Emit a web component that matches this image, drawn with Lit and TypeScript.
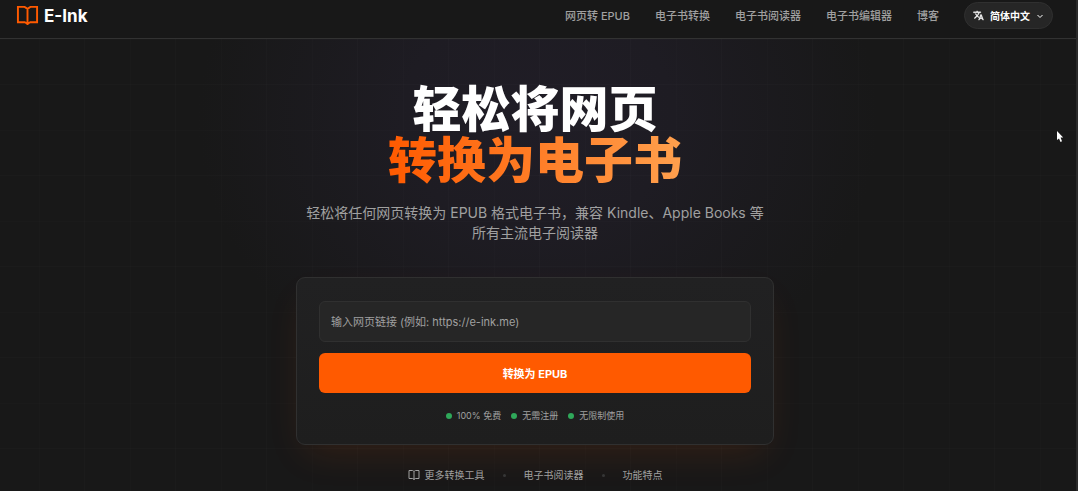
import { LitElement, html, css, svg } from "lit";
import { customElement, state } from "lit/decorators.js";

const bookIcon = svg`
  <path d="M12 6v16M2 3h7l3 2 3-2h7v16h-7l-3 1.500L9 19H2z" />
`;

@customElement("app-root")
export class AppRoot extends LitElement {
  @state() private url = "";

  private navLinks = ["网页转 EPUB", "电子书转换", "电子书阅读器", "电子书编辑器", "博客"];
  private perks = ["100% 免费", "无需注册", "无限制使用"];

  static styles = css`
    :host {
      display: block;
      position: relative;
      box-sizing: border-box;
      min-height: 100vh;
      overflow: hidden;
      background: #181818;
      border-right: 2px solid #2a2a2a;
      color: #a0a0a0;
      font-family: Inter, "Noto Sans CJK SC", sans-serif;
    }
    a {
      color: inherit;
      text-decoration: none;
    }
    .header {
      display: flex;
      align-items: center;
      justify-content: space-between;
      padding: 2px 23px 9px 16px;
      background: #181818;
      border-bottom: 1px solid #323232;
    }
    .brand {
      display: flex;
      align-items: center;
      gap: 5px;
      color: #fff;
      font-size: 17px;
      line-height: 24px;
      font-weight: 700;
    }
    .brand svg {
      width: 23px;
      height: 23px;
      fill: none;
      stroke: #ff5a00;
      stroke-width: 2;
    }
    .nav {
      display: flex;
      align-items: center;
      gap: 25px;
      font-size: 11px;
      line-height: 16px;
      font-weight: 500;
    }
    .lang {
      display: flex;
      align-items: center;
      gap: 6px;
      box-sizing: border-box;
      height: 27px;
      padding: 0 8px;
      border: 1px solid #303030;
      border-radius: 14px;
      background: #262626;
      color: #fff;
      font: inherit;
      font-size: 10px;
      font-weight: 600;
    }
    .lang svg {
      width: 11px;
      height: 11px;
      fill: currentColor;
    }
    .lang .chevron {
      width: 8px;
      height: 8px;
      fill: none;
      stroke: currentColor;
      stroke-width: 2;
    }
    .hero {
      display: flex;
      flex-direction: column;
      align-items: center;
      box-sizing: border-box;
      min-height: calc(100vh - 39px);
      padding: 45px 22px 8px 16px;
      background-image:
        linear-gradient(90deg, rgba(255, 255, 255, 0.012) 1px, transparent 1px),
        linear-gradient(90deg, rgba(255, 255, 255, 0.006) 1px, transparent 1px),
        linear-gradient(rgba(255, 255, 255, 0.012) 1px, transparent 1px),
        linear-gradient(rgba(255, 255, 255, 0.006) 1px, transparent 1px),
        radial-gradient(ellipse 340px 290px at 50% 80px, #201d26 0%, #1e1c23 40%, #181818 100%);
      background-size: 91px 91px, 91px 91px, 91px 91px, 91px 91px, 100% 100%;
      background-position: 84px 0, 39px 0, 0 45px, 0 0, 0 0;
    }
    .title {
      margin: 0;
      color: #fff;
      font-size: 49px;
      line-height: 51px;
      font-weight: 900;
      text-align: center;
    }
    .accent {
      display: block;
      background: linear-gradient(90deg, #ff5a00, #ffa04d);
      -webkit-background-clip: text;
      background-clip: text;
      color: transparent;
    }
    .lead {
      max-width: 470px;
      margin: 17px 0 0;
      font-size: 14px;
      line-height: 20px;
      text-align: center;
    }
    .card {
      display: flex;
      flex-direction: column;
      gap: 11px;
      box-sizing: border-box;
      width: 100%;
      max-width: 478px;
      margin-top: 34px;
      padding: 23px 22px 22px;
      border: 1px solid #303030;
      border-radius: 9px;
      background: linear-gradient(#212122, #1e1e1e);
      box-shadow: 0 16px 36px -9px rgba(255, 90, 0, 0.12);
    }
    .field {
      box-sizing: border-box;
      width: 100%;
      height: 41px;
      padding: 0 11px;
      border: 1px solid #303030;
      border-radius: 6px;
      background: #262626;
      color: #fff;
      font: inherit;
      font-size: 11px;
      outline: none;
    }
    .field::placeholder {
      color: #a0a0a0;
      opacity: 1;
    }
    .submit {
      height: 40px;
      padding: 0;
      border: 0;
      border-radius: 6px;
      background: #ff5a00;
      color: #fff;
      font: inherit;
      font-size: 11px;
      font-weight: 700;
    }
    .perks {
      display: flex;
      justify-content: center;
      gap: 10px;
      margin: 5px 0 0;
      padding: 0;
      list-style: none;
      font-size: 9px;
      line-height: 13px;
    }
    .perk {
      display: flex;
      align-items: center;
      gap: 5px;
    }
    .perk::before {
      content: "";
      width: 6px;
      height: 6px;
      border-radius: 50%;
      background: #2fa85a;
    }
    .more {
      display: flex;
      align-items: center;
      gap: 18px;
      margin-top: 22px;
      font-size: 10px;
      line-height: 16px;
    }
    .more a {
      display: flex;
      align-items: center;
      gap: 5px;
    }
    .more svg {
      width: 12px;
      height: 12px;
      fill: none;
      stroke: currentColor;
      stroke-width: 2;
    }
    .dot {
      width: 3px;
      height: 3px;
      border-radius: 50%;
      background: #363636;
    }
    .pointer {
      position: absolute;
      top: 131px;
      left: 1056px;
      width: 8px;
      height: 11px;
      pointer-events: none;
    }
  `;

  private onInput(e: Event) {
    this.url = (e.target as HTMLInputElement).value;
  }

  render() {
    return html`
      <header class="header">
        <a class="brand" href="#">
          <svg viewBox="0 0 24 24" aria-hidden="true">${bookIcon}</svg>
          <span>E-Ink</span>
        </a>
        <nav class="nav">
          ${this.navLinks.map((label) => html`<a href="#">${label}</a>`)}
          <button class="lang" type="button">
            <svg viewBox="0 0 24 24" aria-hidden="true">
              <path d="m12.87 15.07-2.54-2.51.03-.03A17.52 17.52 0 0 0 14.07 6H17V4h-7V2H8v2H1v2h11.17C11.5 7.92 10.44 9.75 9 11.35 8.07 10.32 7.3 9.19 6.69 8h-2c.73 1.63 1.73 3.17 2.98 4.56l-5.09 5.02L4 19l5-5 3.11 3.11zM18.5 10h-2L12 22h2l1.12-3h4.75L21 22h2zm-2.62 7 1.62-4.33L19.12 17z" stroke="currentColor" stroke-width="0.8" />
            </svg>
            <span>简体中文</span>
            <svg class="chevron" viewBox="0 0 16 16" aria-hidden="true"><path d="m3 6 5 5 5-5" /></svg>
          </button>
        </nav>
      </header>
      <main class="hero">
        <h1 class="title">轻松将网页<span class="accent">转换为电子书</span></h1>
        <p class="lead">轻松将任何网页转换为 EPUB 格式电子书，兼容 Kindle、Apple Books 等所有主流电子阅读器</p>
        <form class="card" @submit=${(e: Event) => e.preventDefault()}>
          <input
            class="field"
            type="url"
            aria-label="网页链接"
            placeholder="输入网页链接 (例如: https://e-ink.me)"
            .value=${this.url}
            @input=${this.onInput}
          />
          <button class="submit" type="submit">转换为 EPUB</button>
          <ul class="perks">
            ${this.perks.map((p) => html`<li class="perk">${p}</li>`)}
          </ul>
        </form>
        <nav class="more">
          <a href="#"><svg viewBox="0 0 24 24" aria-hidden="true">${bookIcon}</svg>更多转换工具</a>
          <span class="dot"></span>
          <a href="#">电子书阅读器</a>
          <span class="dot"></span>
          <a href="#">功能特点</a>
        </nav>
      </main>
      <svg class="pointer" viewBox="0 0 8 11" aria-hidden="true">
        <path d="M1 0v9l2-1.6L4.5 11l1.500-.7L4.600 6.500H7.200z" fill="#fff" />
      </svg>
    `;
  }
}
